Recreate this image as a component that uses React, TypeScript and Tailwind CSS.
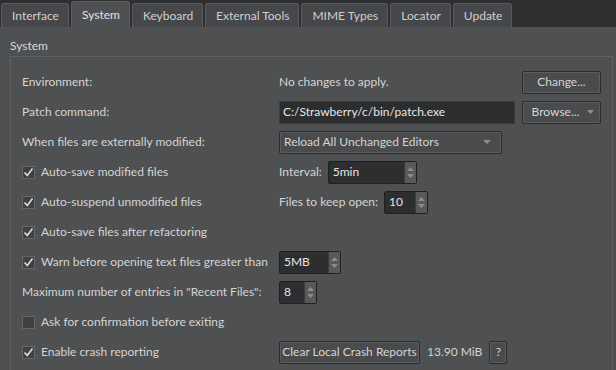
import React from 'react'

const tabs = ['Interface', 'System', 'Keyboard', 'External Tools', 'MIME Types', 'Locator', 'Update']

function Check({ on }: { on: boolean }) {
  return (
    <span className="flex h-[13px] w-[13px] shrink-0 items-center justify-center border border-[#666769] bg-[#3f4042]">
      {on && (
        <svg width="11" height="11" viewBox="0 0 11 11">
          <path d="M1.5 5.5 L4.3 8.5 L9.5 1.5" fill="none" stroke="#dcdcdc" strokeWidth="1.6" />
        </svg>
      )}
    </span>
  )
}

function CheckRow({ on, label }: { on: boolean; label: string }) {
  return (
    <div className="flex items-center gap-[6px]">
      <Check on={on} />
      <span>{label}</span>
    </div>
  )
}

function Button({ children, className = '' }: { children: React.ReactNode; className?: string }) {
  return (
    <div
      className={`flex h-[23px] items-center justify-center rounded-[2px] border border-[#2a2b2d] bg-[#4a4b4d] shadow-[inset_0_0_0_1px_#5c5d5f] ${className}`}
    >
      {children}
    </div>
  )
}

function Spin({ value, w }: { value: string; w: string }) {
  return (
    <div className={`flex h-[23px] ${w} rounded-[2px] border border-[#1f2021] bg-[#2d2e30]`}>
      <span className="flex flex-1 items-center pl-[4px] text-[#e6e6e6]">{value}</span>
      <div className="flex w-[12px] flex-col items-center justify-center gap-[3px] border-l border-[#3a3b3d] bg-[#58595b]">
        <svg width="7" height="4" viewBox="0 0 7 4">
          <path d="M0 4 L3.5 0 L7 4 Z" fill="#8c8d8f" />
        </svg>
        <svg width="7" height="4" viewBox="0 0 7 4">
          <path d="M0 0 L3.5 4 L7 0 Z" fill="#8c8d8f" />
        </svg>
      </div>
    </div>
  )
}

function Row({ children }: { children: React.ReactNode }) {
  return <div className="flex h-[30px] items-center">{children}</div>
}

function Left({ children }: { children: React.ReactNode }) {
  return <div className="w-[257px] shrink-0">{children}</div>
}

export default function App() {
  return (
    <div
      className="h-[370px] w-[616px] overflow-hidden whitespace-nowrap bg-[#4f5052] text-[12px] text-[#d4d4d4]"
      style={{ fontFamily: 'Lato, "Open Sans", sans-serif' }}
    >
      {/* tab bar */}
      <div className="flex h-[27px] items-end gap-[2px] bg-[#2e2f31] pl-[1px]">
        {tabs.map((t) => {
          const sel = t === 'System'
          return (
            <div
              key={t}
              className={
                sel
                  ? 'flex h-[26px] items-center rounded-t-[3px] border border-b-0 border-[#5b5c5e] bg-[#4f5052] pl-[10px] pr-[9px] text-[#e0e0e0]'
                  : 'flex h-[24px] items-center rounded-t-[3px] border border-b-0 border-[#5a5b5d] bg-[#46474a] pl-[10px] pr-[9px] text-[#cfcfcf]'
              }
            >
              {t}
            </div>
          )
        })}
      </div>

      {/* group */}
      <div className="pl-[10px] pr-[3px] pt-[10px]">
        <div className="h-[18px] leading-[18px] text-[#d8d8d8]">System</div>
        <div className="mt-[1px] h-[400px] border border-[#606163] pl-[11px] pr-[11px] pt-[10px]">
          <Row>
            <Left>Environment:</Left>
            <span className="flex-1">No changes to apply.</span>
            <Button className="w-[79px]">Change...</Button>
          </Row>
          <Row>
            <Left>Patch command:</Left>
            <div className="flex h-[23px] w-[236px] items-center border border-[#3c3d3f] bg-[#2c2d2f] pl-[3px] text-[#e6e6e6]">
              C:/Strawberry/c/bin/patch.exe
            </div>
            <div className="flex-1" />
            <Button className="w-[79px] gap-[8px] pl-[3px]">
              Browse...
              <svg width="7" height="4" viewBox="0 0 7 4">
                <path d="M0 0 L3.5 4 L7 0 Z" fill="#8c8d8f" />
              </svg>
            </Button>
          </Row>
          <Row>
            <Left>When files are externally modified:</Left>
            <Button className="w-[223px] !justify-between px-[4px]">
              <span>Reload All Unchanged Editors</span>
              <svg width="8" height="4" viewBox="0 0 8 4" className="mr-[6px]">
                <path d="M0 0 L4 4 L8 0 Z" fill="#8c8d8f" />
              </svg>
            </Button>
          </Row>
          <Row>
            <Left>
              <CheckRow on label="Auto-save modified files" />
            </Left>
            <span className="mr-[6px]">Interval:</span>
            <Spin value="5min" w="w-[89px]" />
          </Row>
          <Row>
            <Left>
              <CheckRow on label="Auto-suspend unmodified files" />
            </Left>
            <span className="mr-[6px]">Files to keep open:</span>
            <Spin value="10" w="w-[44px]" />
          </Row>
          <Row>
            <CheckRow on label="Auto-save files after refactoring" />
          </Row>
          <Row>
            <Left>
              <CheckRow on label="Warn before opening text files greater than" />
            </Left>
            <Spin value="5MB" w="w-[62px]" />
          </Row>
          <Row>
            <Left>Maximum number of entries in "Recent Files":</Left>
            <Spin value="8" w="w-[38px]" />
          </Row>
          <Row>
            <CheckRow on={false} label="Ask for confirmation before exiting" />
          </Row>
          <Row>
            <Left>
              <CheckRow on label="Enable crash reporting" />
            </Left>
            <Button className="w-[141px]">Clear Local Crash Reports</Button>
            <span className="ml-[7px]">13.90 MiB</span>
            <Button className="ml-[7px] w-[18px]">?</Button>
          </Row>
        </div>
      </div>
    </div>
  )
}
